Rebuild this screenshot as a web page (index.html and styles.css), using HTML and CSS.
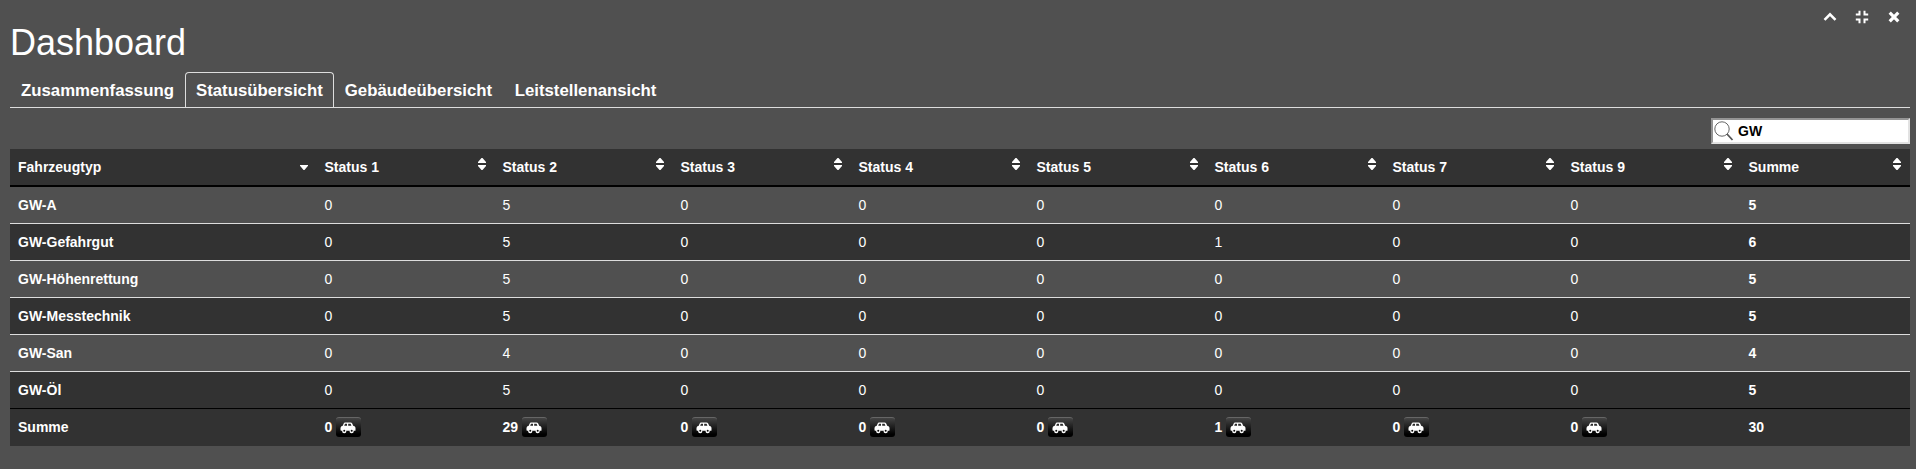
FILE: index.html
```
<!DOCTYPE html>
<html lang="de">
<head>
<meta charset="utf-8">
<title>Dashboard</title>
<link rel="stylesheet" href="styles.css">
</head>
<body>
<svg class="defs" width="0" height="0">
  <symbol id="car" viewBox="0 0 16 12"><path fill-rule="evenodd" d="M5 .5h5.500q1.200 0 1.700 1l1 2.300q2.300.3 2.300 2v2.400q0 .5-.6.500h-1.300a2 2 0 1 1-3.900 0H6.200a2 2 0 1 1-3.900 0H1.100q-.6 0-.6-.6V6q0-2 2.200-2.200l1-2.300Q4.100.5 5 .500zM5 1.800 4.200 3.800h2.800V1.800zM8.200 1.800v2h3.200l-.8-2zM4.250 7.700a1 1 0 1 0 0 2 1 1 0 0 0 0-2zM11.700 7.700a1 1 0 1 0 0 2 1 1 0 0 0 0-2z"/></symbol>
  <symbol id="sort" viewBox="0 0 8 12"><path d="M3.500 0h1L8 4v1H0V4zM0 7h8v1l-3.500 4h-1L0 8z"/></symbol>
</svg>
<main class="dashboard">
  <header class="head">
    <h1 class="title">Dashboard</h1>
    <div class="controls">
      <svg width="14" height="14" viewBox="0 0 14 14"><path class="stroke" d="m1.500 9.800 5.500-5.500 5.500 5.500"/></svg>
      <svg width="14" height="14" viewBox="0 0 14 14"><path class="thin" d="M.8 4.500h3.700V.8M9.500.8v3.700h3.700M.8 9.500h3.700v3.700M9.500 13.200V9.500h3.700"/></svg>
      <svg width="14" height="14" viewBox="0 0 14 14"><path class="cross" d="m2.700 2.700 8.600 8.600m0-8.600-8.600 8.600"/></svg>
    </div>
  </header>
  <nav class="tabs">
    <a class="tab">Zusammenfassung</a>
    <a class="tab active">Statusübersicht</a>
    <a class="tab">Gebäudeübersicht</a>
    <a class="tab">Leitstellenansicht</a>
  </nav>
  <div class="toolbar">
    <label class="search">
      <svg width="20" height="20" viewBox="0 0 20 20"><circle cx="8" cy="8" r="7.200" fill="none" stroke="#666" stroke-width="1"/><path d="m13 13 5.500 6" stroke="#555" stroke-width="1.800"/></svg>
      <span>GW</span>
    </label>
  </div>
  <table class="grid">
    <colgroup><col class="c-type"><col span="8" class="c-status"><col class="c-sum"></colgroup>
    <thead><tr id="head"></tr></thead>
    <tbody id="body"></tbody>
    <tfoot><tr id="foot"></tr></tfoot>
  </table>
</main>
<script src="app.js"></script>
</body>
</html>
```
FILE: styles.css
```
* { box-sizing: border-box; }
body { margin: 0; background: #505050; color: #fff; font: 14px/20px "Liberation Sans", Arial, sans-serif; }
.defs { position: absolute; }
.dashboard { padding: 0 6px 0 10px; height: 469px; overflow: hidden; }
.head { display: flex; justify-content: space-between; height: 72px; }
.title { margin: 23px 0 0; font-size: 36px; line-height: 40px; font-weight: 400; }
.controls { display: flex; gap: 18px; padding: 10px 9px 0 0; }
.controls svg { display: block; fill: none; stroke: #fff; }
.stroke { stroke-width: 2.600; }
.thin { stroke-width: 2; }
.cross { stroke-width: 3.200; }
.tabs { display: flex; height: 36px; border-bottom: 1px solid #ddd; width: 1900px; }
.tab { height: 35px; padding: 8px 10px 0; border: 1px solid transparent; border-bottom: 0; font-size: 16.800px; font-weight: 700; }
.tab:last-child { padding-left: 10.600px; }
.tab.active { border-color: #ddd; border-radius: 4px 4px 0 0; }
.toolbar { display: flex; justify-content: flex-end; width: 1900px; height: 41px; padding-top: 10px; }
.search { display: flex; width: 199px; height: 26px; background: #fff; color: #000; border: 2px solid; border-color: #949494 #e2e2e2 #e2e2e2 #949494; font-weight: 700; }
.search svg { margin: 1px 4px 0 1px; }
.search span { padding-top: 1px; }
.grid { width: 1900px; table-layout: fixed; border-collapse: separate; border-spacing: 0; }
.c-type { width: 307px; }
.c-status { width: 178px; }
.c-sum { width: 169px; }
th, td { padding: 8px 8.500px 8px 7.500px; height: 37px; text-align: left; vertical-align: top; border-top: 1px solid #ddd; }
th { font-weight: 700; }
th:first-child { padding-left: 8px; }
thead th { height: 38px; background: #323232; border-top: 0; border-bottom: 2px solid #000; }
.label { display: flex; justify-content: space-between; }
.label svg { fill: #fff; margin: 1px .5px 0 0; }
.label .down { margin-top: 8px; }
tbody tr:first-child > * { border-top: 0; height: 36px; }
tbody tr:nth-child(even), tfoot tr { background: #323232; }
tfoot th { border-top-color: #000; height: 38px; }
.total { display: flex; gap: 3.700px; }
.car { display: flex; justify-content: center; width: 25px; height: 20px; padding-top: 4px; border-radius: 3px; border-top: 1px solid #666; background: linear-gradient(#444, #000 85%); }
.car svg { fill: #fff; }
```
FILE: app.js
```
const headers = ["Fahrzeugtyp", ...[1, 2, 3, 4, 5, 6, 7, 9].map(n => "Status " + n), "Summe"];
const rows = [
  ["GW-A", 0, 5, 0, 0, 0, 0, 0, 0, 5],
  ["GW-Gefahrgut", 0, 5, 0, 0, 0, 1, 0, 0, 6],
  ["GW-Höhenrettung", 0, 5, 0, 0, 0, 0, 0, 0, 5],
  ["GW-Messtechnik", 0, 5, 0, 0, 0, 0, 0, 0, 5],
  ["GW-San", 0, 4, 0, 0, 0, 0, 0, 0, 4],
  ["GW-Öl", 0, 5, 0, 0, 0, 0, 0, 0, 5]
];
const totals = ["Summe", 0, 29, 0, 0, 0, 1, 0, 0, 30];
const edge = i => i === 0 || i === 9;
const down = '<svg class="down" width="8" height="5"><path d="M0 0h8v.7L4.500 5h-1L0 .7z"/></svg>';
const both = '<svg width="8" height="12"><use href="#sort"/></svg>';
const car = '<span class="car"><svg width="16" height="12"><use href="#car"/></svg></span>';
document.getElementById("head").innerHTML = headers.map((h, i) =>
  `<th><div class="label"><span>${h}</span>${i ? both : down}</div></th>`).join("");
document.getElementById("body").innerHTML = rows.map(r =>
  "<tr>" + r.map((v, i) => edge(i) ? `<th>${v}</th>` : `<td>${v}</td>`).join("") + "</tr>").join("");
document.getElementById("foot").innerHTML = totals.map((v, i) =>
  `<th><div class="total"><span>${v}</span>${edge(i) ? "" : car}</div></th>`).join("");
```
